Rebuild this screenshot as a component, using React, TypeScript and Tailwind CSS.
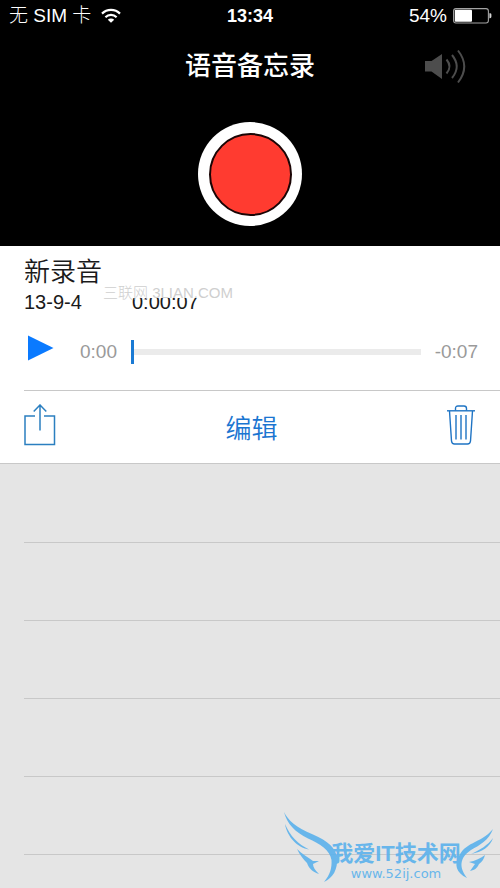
import { useState } from 'react'

const memo = {
  name: '新录音',
  date: '13-9-4',
  length: '0:00:07',
  seconds: 7
}

const emptyRows = [1, 2, 3, 4, 5]

function WifiIcon() {
  return (
    <svg className="w-5 h-4" viewBox="0 0 20 16" fill="none" stroke="white" strokeWidth="2.2">
      <path d="M1 5.6a12.8 12.8 0 0 1 18 0" />
      <path d="M4.4 9.2a8 8 0 0 1 11.2 0" />
      <path d="M10 14.8 6.8 11.7a4.6 4.6 0 0 1 6.4 0Z" fill="white" stroke="none" />
    </svg>
  )
}

function BatteryIcon() {
  return (
    <svg className="w-[39px] h-4" viewBox="0 0 39 16" fill="none">
      <rect x="0.6" y="0.6" width="34.8" height="14.4" rx="2.4" stroke="#a3a3a3" strokeWidth="1.1" />
      <rect x="1.8" y="1.8" width="17.2" height="12" rx="1" fill="white" />
      <path d="M36.4 5.2h.6a1.4 1.4 0 0 1 1.4 1.4v2.2a1.4 1.4 0 0 1-1.4 1.4h-.6Z" fill="#d4d4d4" />
    </svg>
  )
}

function SpeakerIcon() {
  return (
    <svg className="w-[42px] h-9" viewBox="0 0 42 36" fill="none" stroke="#4d4d4d" strokeWidth="2">
      <path d="M0 13h6.5L17 6v25L6.5 23.5H0Z" fill="#4d4d4d" stroke="none" />
      <path d="M21.5 11.5q6 7 0 14" />
      <path d="M27 7q9.5 11.500 0 23" />
      <path d="M33 2.500q12.500 16 0 32" />
    </svg>
  )
}

function ShareIcon() {
  return (
    <svg className="w-8 h-[42px]" viewBox="0 0 32 42" fill="none" stroke="#2b7fc0" strokeWidth="1.5">
      <path d="M11 12H1V40.500h29.500V12H20" />
      <path d="M16 26.500V1M9.700 7.500 16 1 22.300 7.500" />
    </svg>
  )
}

function TrashIcon() {
  return (
    <svg className="w-7 h-10" viewBox="0 0 28 40" fill="none" stroke="#1f74c4" strokeWidth="1.400">
      <path d="M0 5.800h28" />
      <path d="M8.500 5.500V3.500Q8.500 1 11 1h6q2.500 0 2.500 2.500v2" />
      <path d="M2.500 6 4.500 36q.3 3 3 3h13q2.700 0 3-3l2-30" />
      <path d="M9 10v24.500M14 10v24.500M19 10v24.500" />
    </svg>
  )
}

function SiteMark() {
  return (
    <div className="absolute right-1 bottom-0 w-[214px] h-20 text-[#5bb2ec] opacity-90 pointer-events-none">
      <svg className="w-full h-full" viewBox="0 0 214 80" fill="currentColor">
        <path d="M2 4C6 12 13 19 31 26.500C46 33 54 40 55 50C56 61 51 70 42 74C48 67 50 60 49.500 52C48 42 38 36 26 30.500C13 24 5 16 2 4Z" />
        <path d="M3 16C8 28 16 36 27 41.500C16 40 5 29 3 16Z" />
        <path d="M15 41C20 46 26 49 31 53L37 53L31 56C31 59 33 62 37 66C31 64 27 61 25 55C21 51 18 47 15 41Z" />
        <path d="M211 21C207 32 198 37 189 42C180 48 175 57 185 70C174 65 172 56 177 48C181 40 187 37 193 34C201 30 206 27 211 21Z" />
        <path d="M211 30C208 39 200 44 189 46C198 42 206 37 211 30Z" />
        <path d="M203 47C199 50 193 53 187 54L193 56L188 63C193 62 195 60 197 56C200 54 202 51 203 47Z" />
      </svg>
      <div className="absolute inset-x-0 top-[34px] pl-3.5 flex flex-col items-center">
        <span className="text-[22px] leading-6 font-bold whitespace-nowrap">我爱IT技术网</span>
        <span className="text-[13px] leading-4 font-['DejaVu_Sans']">www.52ij.com</span>
      </div>
    </div>
  )
}

export default function App() {
  const [position, setPosition] = useState(0)

  return (
    <div className="relative min-h-screen flex flex-col overflow-hidden bg-[#e5e5e5] font-['Liberation_Sans','Noto_Sans_CJK_SC',sans-serif]">
      {/* Status bar + recorder */}
      <header className="bg-black text-white pb-5">
        <div className="grid grid-cols-3 items-center h-8 px-2 text-[19px]">
          <div className="flex items-center gap-2.5 pl-px font-light whitespace-nowrap">
            <span>无 SIM 卡</span>
            <WifiIcon />
          </div>
          <span className="text-center text-lg font-bold">13:34</span>
          <div className="flex items-center justify-end gap-1.5">
            <span>54%</span>
            <BatteryIcon />
          </div>
        </div>

        <div className="grid grid-cols-[1fr_auto_1fr] items-center h-[68px] px-[33px]">
          <h1 className="col-start-2 text-[26px] font-medium">语音备忘录</h1>
          <button aria-label="扬声器" className="justify-self-end">
            <SpeakerIcon />
          </button>
        </div>

        <div className="flex justify-center pt-[22px]">
          <button aria-label="录音" className="w-[104px] h-[104px] rounded-full bg-white flex items-center justify-center">
            <span className="w-[83px] h-[83px] rounded-full bg-[#ff3b30] border-2 border-[#1a0505]" />
          </button>
        </div>
      </header>

      {/* Selected memo */}
      <section className="bg-white border-b border-[#c8c8c8]">
        <div className="pl-6 pt-2">
          <h2 className="text-[26px] leading-9 font-[350] text-[#1a1a1a]">{memo.name}</h2>
          <div className="relative flex text-[20px] leading-6 text-[#1a1a1a]">
            <span className="w-[108px]">{memo.date}</span>
            <span>{memo.length}</span>
            <span className="absolute left-[79px] -top-1 bg-white text-[15px] leading-3 h-3 pt-px font-light text-[#cfcfcf] whitespace-nowrap">
              三联网 3LIAN.COM
            </span>
          </div>
        </div>

        <div className="flex items-center h-[76px] pl-7 pr-[22px] text-[19px] text-[#9a9a9a]">
          <button aria-label="播放" className="w-[52px] pb-2">
            <svg className="w-[26px] h-[26px]" viewBox="0 0 26 26" fill="#0a7aff">
              <path d="M0 0.500 25.500 13 0 25.500Z" />
            </svg>
          </button>
          <span>0:00</span>
          <input
            type="range"
            aria-label="播放进度"
            min={0}
            max={memo.seconds}
            value={position}
            onChange={(e) => setPosition(Number(e.target.value))}
            className="flex-1 min-w-0 h-6 ml-3.5 mr-3.5 appearance-none bg-transparent [&::-webkit-slider-runnable-track]:h-1.5 [&::-webkit-slider-runnable-track]:bg-[#ebebeb] [&::-webkit-slider-thumb]:appearance-none [&::-webkit-slider-thumb]:w-[3px] [&::-webkit-slider-thumb]:h-6 [&::-webkit-slider-thumb]:-mt-[9px] [&::-webkit-slider-thumb]:bg-[#1a7ad4]"
          />
          <span>-0:07</span>
        </div>

        <div className="ml-6 border-t border-[#c8c8c8] flex items-center justify-between h-[73px] pr-[25px]">
          <button aria-label="共享" className="pb-1">
            <ShareIcon />
          </button>
          <button className="text-[26px] font-[350] text-[#1a75d1] pt-1">编辑</button>
          <button aria-label="删除" className="pb-1">
            <TrashIcon />
          </button>
        </div>
      </section>

      {/* Empty list */}
      <ul className="pl-6 pt-px">
        {emptyRows.map((row) => (
          <li key={row} className="h-[78px] border-b border-[#c8c8c8]" />
        ))}
      </ul>

      <SiteMark />
    </div>
  )
}
